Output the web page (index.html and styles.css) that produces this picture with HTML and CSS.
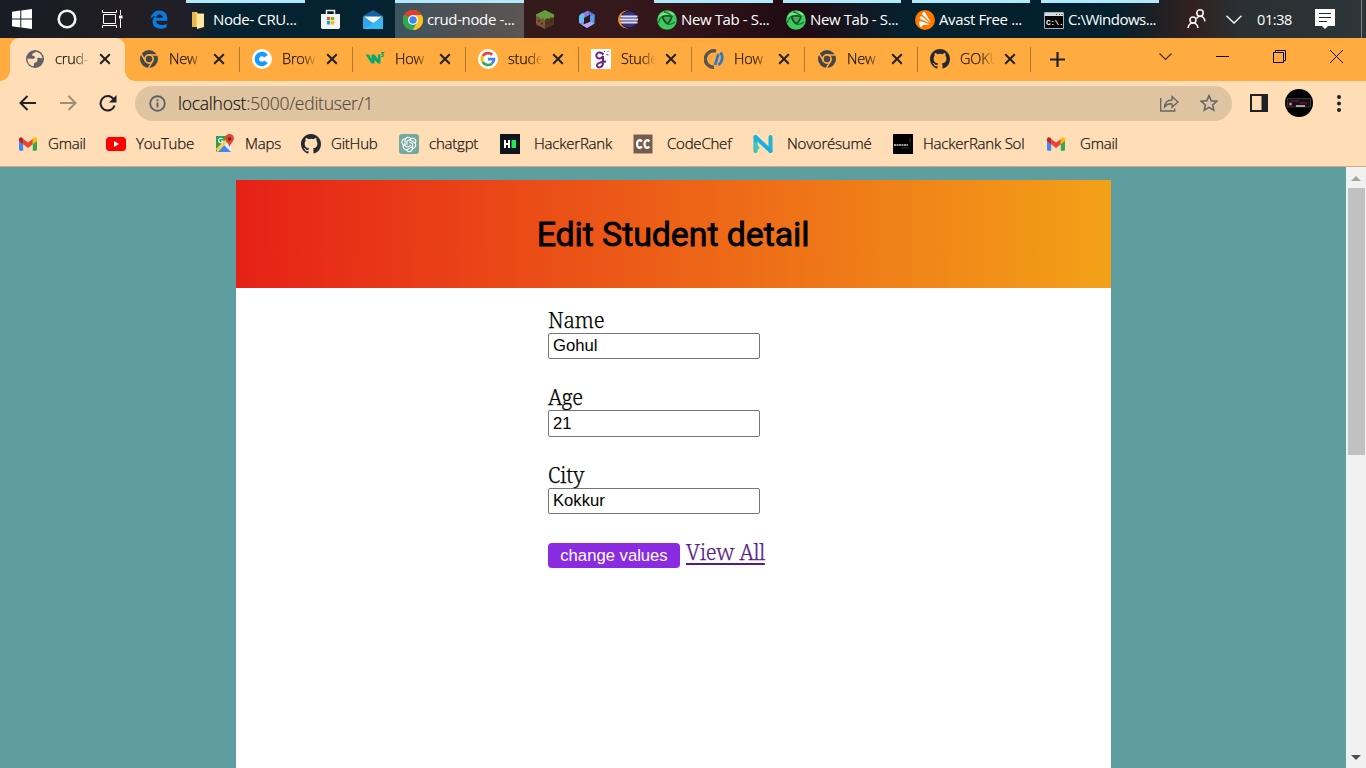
FILE: index.html
```html
<!DOCTYPE html>
<html lang="en">
<head>
<meta charset="utf-8">
<title>crud-node</title>
<link rel="stylesheet" href="styles.css">
</head>
<body>
<svg class="defs" width="0" height="0">
  <defs>
    <symbol id="x" viewBox="0 0 12 12"><path d="M1.2 1.2l9.6 9.6M10.8 1.2L1.2 10.8" stroke="#202124" stroke-width="2" fill="none"/></symbol>
    <symbol id="chromeMono" viewBox="0 0 20 20"><circle cx="10" cy="10" r="9" fill="#454647"/><circle cx="10" cy="10" r="4.1" fill="#454647" stroke="#ffab40" stroke-width="1.7"/><path d="M10 5.9h8.4M6.5 12.1L2.3 4.8M13.5 12.1L9.4 19.2" stroke="#ffab40" stroke-width="1.5"/></symbol>
    <symbol id="github" viewBox="0 0 16 16"><path fill="#24292f" d="M8 0C3.58 0 0 3.58 0 8c0 3.54 2.29 6.53 5.47 7.59.4.07.55-.17.55-.38 0-.19-.01-.82-.01-1.49-2.01.37-2.53-.49-2.69-.94-.09-.23-.48-.94-.82-1.13-.28-.15-.68-.52-.01-.53.63-.01 1.08.58 1.23.82.72 1.21 1.87.87 2.33.66.07-.52.28-.87.51-1.07-1.78-.2-3.64-.89-3.64-3.95 0-.87.31-1.59.82-2.15-.08-.2-.36-1.02.08-2.12 0 0 .67-.21 2.2.82a7.6 7.6 0 0 1 4 0c1.53-1.04 2.2-.82 2.2-.82.44 1.1.16 1.92.08 2.12.51.56.82 1.27.82 2.15 0 3.07-1.87 3.75-3.65 3.95.29.25.54.73.54 1.48 0 1.07-.01 1.93-.01 2.2 0 .21.15.46.55.38A8.01 8.01 0 0 0 16 8c0-4.42-3.58-8-8-8z"/></symbol>
    <symbol id="gmail" viewBox="0 0 20 16"><path d="M1 3v10.5a1.3 1.3 0 0 0 1.3 1.3H5.200V6z" fill="#4285f4"/><path d="M19 3v10.500a1.300 1.300 0 0 1-1.300 1.300H14.800V6z" fill="#34a853"/><path d="M5.200 2.900L10 6.600l4.800-3.700v5.300L10 11.900 5.200 8.200z" fill="#ea4335"/><path d="M1 3.300C1 1.400 3 .7 4.300 1.800l.9.900v5.500L1 5z" fill="#c5221f"/><path d="M19 3.300c0-1.900-2-2.600-3.300-1.500l-.9.900v5.500L19 5z" fill="#fbbc04"/></symbol>
    <symbol id="green" viewBox="0 0 20 20"><circle cx="10" cy="10" r="9.800" fill="#3ccb5c"/><path d="M1 7C5 1 14-1 18 5L10 4.500z" fill="#74e78a"/><path d="M5.500 6.500q4.500-1.500 9.500 0-1 4.500-4.700 7.500-4-3-4.800-7.500z" fill="#45a757" stroke="#10461f" stroke-width="1.500" stroke-linejoin="round"/><path d="M5.300 6.500Q2 9 1.500 13M15 6.500Q12 2.500 7 2M10.300 14q4.500 1 7.500-2" fill="none" stroke="#1b7a30" stroke-width="1.300"/></symbol>
  </defs>
</svg>

<header class="taskbar">
  <div class="cell"><svg width="20" height="20" viewBox="0 0 20 20"><path fill="#fff" d="M0 2.700L8.300 1.500v8H0zM9.300 1.400L20 0v9.500H9.300zM0 10.500h8.300v8L0 17.300zM9.300 10.500H20V20L9.300 18.600z"/></svg></div>
  <div class="cell"><svg width="20" height="20" viewBox="0 0 20 20"><circle cx="10" cy="10" r="8.300" fill="none" stroke="#f4f4f4" stroke-width="2.600"/></svg></div>
  <div class="cell"><svg width="21" height="20" viewBox="0 0 21 20" fill="none" stroke="#fff"><path d="M1.500 5.500h12v9h-12zM.5 1v2.500h14V1M.5 19v-2.500h14V19M18.500 1v5M18.500 10v9"/><path d="M17 8h3.500" stroke-width="3"/></svg></div>
  <div class="cell edge"><svg width="18" height="19" viewBox="0 0 18 19"><path fill="#0a7be0" d="M.5 9C1.500 3.500 5 .5 9.300.5c5.500 0 8 4 8 8v2.200H6c.3 3 3 4.300 5.600 4.300 2 0 3.700-.6 5-1.300v3.500c-1.500.9-3.500 1.500-6 1.500-5 0-8-2.800-8-7.200C2.600 9 4 7 6.300 5.700 3.800 6 1.900 7.200.5 9zM6.200 7.800h6.500c0-2.200-1-3.500-3.200-3.500-1.900 0-3.100 1.700-3.300 3.500z"/></svg></div>
  <div class="app app-node"><svg width="12" height="17" viewBox="0 0 12 17"><path d="M0 0h5l1 1.500h6V15H0z" fill="#f4cf67"/><path d="M5 2h7v13L5 17z" fill="#ffe7a1"/><path d="M0 0h2l2 2v13H0z" fill="#e4b94e"/></svg><span>Node- CRU...</span></div>
  <div class="cell"><svg width="19" height="20" viewBox="0 0 19 20"><path d="M5.500 6V1.500h8V6" fill="none" stroke="#eee" stroke-width="1.500"/><path d="M0 5h19v13.500L18 20H1L0 18.500z" fill="#f4f4f4"/><path d="M6 8h3.200v3.200H6z" fill="#f25022"/><path d="M10 8h3.200v3.200H10z" fill="#7fba00"/><path d="M6 12h3.200v3.500H6z" fill="#00a4ef"/><path d="M10 12h3.200v3.500H10z" fill="#ffb900"/></svg></div>
  <div class="cell"><svg width="20" height="19" viewBox="0 0 20 19"><path d="M0 6l10-6 10 6v13H0z" fill="#1263a8"/><path d="M1 6.500h18L10 14z" fill="#f5f8fb"/><path d="M0 6.500L20 19H0z" fill="#2fa5ee"/><path d="M20 6.500V19H1L10 13z" fill="#35b8f5"/></svg></div>
  <div class="app app-chrome"><svg width="20" height="20" viewBox="0 0 20 20"><circle cx="10" cy="10" r="10" fill="#fbc116"/><path d="M10 10L1.300 5a10 10 0 0 1 17.400 0z" fill="#e33b2e"/><path d="M10 10L1.300 5A10 10 0 0 0 10 20l4.300-7.500z" fill="#2da94f"/><path d="M18.700 5H10v5l4 2.500L10 20A10 10 0 0 0 18.700 5z" fill="#fcc31e"/><circle cx="10" cy="10" r="5" fill="#fff"/><circle cx="10" cy="10" r="3.800" fill="#4285f4"/></svg><span>crud-node -...</span></div>
  <div class="cell"><svg width="18" height="19" viewBox="0 0 18 19"><path d="M0 4.500L9 9v10l-9-4.500z" fill="#79553a"/><path d="M18 4.500L9 9v10l9-4.500z" fill="#51361f"/><path d="M9 0l9 4.500V7l-2 1-1-1-2 2-2-1-2 2-2-2-2 1-2-2-3-1V4.500z" fill="#659b3f"/><path d="M3 10v1.500M6 13v1.500M11.500 12v1.500M15 10v1.500" stroke="#362316" stroke-width="1.500"/></svg></div>
  <div class="cell"><svg width="18" height="19" viewBox="0 0 18 19"><path d="M10 .500L4 3.500 1 6v7l5 2V8l6-3.500z" fill="#8d7bea"/><path d="M10 .500l6.500 4V9l-4.500-2.500V4.500z" fill="#4b7ddf"/><path d="M16.500 4.500v9L9 18l-5-3 8-3V6.500z" fill="#579ded"/><path d="M1 13l8 5 7.500-4.500-4.500-1.500-6 2.500z" fill="#b9a6f6"/><path d="M1 6l3-3 2.500 1.500L6 8v4L1 13z" fill="#5fc4f3"/></svg></div>
  <div class="cell"><svg width="20" height="19" viewBox="0 0 20 19"><circle cx="9" cy="9.500" r="9" fill="#ef9028"/><circle cx="11" cy="9.500" r="9" fill="#251438"/><circle cx="11" cy="9.500" r="8" fill="#3b317a"/><path d="M2.500 6.500h17M2 9.500h18M2.500 12.500h17" stroke="#e0dded" stroke-width="2"/></svg></div>
  <div class="app app-tab1"><svg width="20" height="20"><use href="#green"/></svg><span>New Tab - S...</span></div>
  <div class="app app-tab2"><svg width="20" height="20"><use href="#green"/></svg><span>New Tab - S...</span></div>
  <div class="app app-avast"><svg width="20" height="20" viewBox="0 0 20 20"><circle cx="10" cy="10" r="10" fill="#ff7800"/><path d="M8 2.500c1-.8 2-.3 2.500.7L16 13 7.500 4.800C6.800 4 7 3 8 2.500zM5 7c.5-1 1.800-1 2.500-.3L15 13.500 5.500 9C4.700 8.500 4.600 7.700 5 7zM4 12.500c0-1 1-1.500 2-1.300l9 3.300-7 .500-2 2.500c-1-1-2-3-2-5z" fill="#fff"/></svg><span>Avast Free ...</span></div>
  <div class="app app-cmd"><svg width="20" height="17" viewBox="0 0 20 17"><path d="M.5.500h19v16H.5z" fill="#000" stroke="#a9adb0"/><path d="M1 1h18v3H1z" fill="#d5dce1"/><path d="M12 2.500h1M15 2.500h1M17.500 2.500h1" stroke="#555"/><text x="2" y="13" class="cmd-text">C:\.</text></svg><span>C:\Windows...</span></div>
  <div class="cell"><svg width="19" height="20" viewBox="0 0 19 20" fill="none" stroke="#f2f2f2" stroke-width="1.600"><circle cx="13" cy="4" r="3.200"/><circle cx="6" cy="11" r="3"/><path d="M1 19c.5-3 2.500-5 5-5s4.500 2 5 5M9.500 9.500C10.500 8 11.500 7.300 13 7.300c2.700 0 4.500 2 5 5"/></svg></div>
  <div class="cell"><svg width="16" height="9" viewBox="0 0 16 9"><path d="M.500.700L8 8 15.500.700" fill="none" stroke="#fff" stroke-width="1.300"/></svg></div>
  <div class="cell clock">01:38</div>
  <div class="cell"><svg width="20" height="20" viewBox="0 0 20 20"><path d="M0 0h20v17h-7l-3 3-3-3H0z" fill="#fff"/><path d="M4 4.500h12M4 8.500h12M4 12.500h8" stroke="#25292c"/></svg></div>
  <div class="desktop-edge"></div>
</header>

<nav class="tabs">
  <div class="tab active"><svg class="fav" viewBox="0 0 20 20"><circle cx="10" cy="10" r="9" fill="#5f6368"/><path d="M10.500 2.800c-1 1.700-3.500 1.200-3.300 3.200.2 1.400 2.300.4 2.700 1.900.5 1.700-1.500 2-3.200 1.900L2.500 9.500c-.2 3 1 5 2.500 6.300l2.500 1.400c1.500.4 1.500-1.500 1.500-2.500 0-1.500 2.500-1 3.300-2.500.7-1.500-.8-2.500.5-3.200 1.500-.8 2.700.5 4.700.2C17 6 14.500 3.200 10.500 2.800z" fill="#ffdeb7"/></svg><span>crud-</span><svg class="close"><use href="#x"/></svg></div>
  <div class="tab"><svg class="fav"><use href="#chromeMono"/></svg><span>New</span><svg class="close"><use href="#x"/></svg></div>
  <div class="tab"><svg class="fav" viewBox="0 0 20 20"><circle cx="10" cy="10" r="10" fill="#fff"/><path d="M14 7.200A5 5 0 1 0 14 12.800" fill="none" stroke="#159bff" stroke-width="4.400"/></svg><span>Brow</span><svg class="close"><use href="#x"/></svg></div>
  <div class="tab"><svg class="fav" viewBox="0 0 20 20"><path d="M.5 5.500h3.500l2.500 4.500V5.500h3l3.500 4.500V5.500h2.500v9h-2.500L9.500 11v3.500H6.500z" fill="#04aa6d"/><path d="M16 3.500h2.700L17 5.500c2.500 0 2 2.500-.9 2" fill="none" stroke="#04aa6d" stroke-width="1.100"/></svg><span>How</span><svg class="close"><use href="#x"/></svg></div>
  <div class="tab"><svg class="fav" viewBox="0 0 20 20"><circle cx="10" cy="10" r="10" fill="#fff"/><g fill="none" stroke-width="2.700"><path d="M14.200 5.800A6 6 0 0 0 4.800 7" stroke="#ea4335"/><path d="M4.800 7a6 6 0 0 0 0 6" stroke="#fbbc05"/><path d="M4.800 13a6 6 0 0 0 8.900 1.700" stroke="#34a853"/><path d="M13.700 14.700A6 6 0 0 0 16 10.200h-6" stroke="#4285f4"/></g></svg><span>stude</span><svg class="close"><use href="#x"/></svg></div>
  <div class="tab"><svg class="fav" viewBox="0 0 20 20"><path d="M0 0h20v20H0z" fill="#fff"/><path d="M12.500 5.500C9 1.500 4.500 4 5.500 7.500c1 3 5 2.500 6.500-.5v7c0 4.500-5 5.500-6 3-1-3 4-4 9-4.500" fill="none" stroke="#692482" stroke-width="2"/><path d="M13 3l1-1M15.500 5.500l2 .5M17 2v1" stroke="#692482"/></svg><span>Stude</span><svg class="close"><use href="#x"/></svg></div>
  <div class="tab"><svg class="fav" viewBox="0 0 20 20"><path d="M12 2.200A8.200 8.200 0 1 0 10 18.200" fill="none" stroke="#555" stroke-width="3.400"/><path d="M14.500 5L11 16" stroke="#2878c8" stroke-width="2.600"/><path d="M16.500 3.500c3 3.500 2 9.500-2 12.500" fill="none" stroke="#2878c8" stroke-width="2.800"/></svg><span>How</span><svg class="close"><use href="#x"/></svg></div>
  <div class="tab"><svg class="fav"><use href="#chromeMono"/></svg><span>New</span><svg class="close"><use href="#x"/></svg></div>
  <div class="tab"><svg class="fav"><use href="#github"/></svg><span>GOKU</span><svg class="close"><use href="#x"/></svg></div>
  <svg class="plus" width="15" height="15" viewBox="0 0 15 15"><path d="M7.500 0v15M0 7.500h15" stroke="#202124" stroke-width="2.200"/></svg>
  <div class="window-buttons">
    <svg width="13" height="8" viewBox="0 0 13 8"><path d="M.500.500l6 6 6-6" fill="none" stroke="#3b2c17" stroke-width="1.100"/></svg>
    <svg width="13" height="8" viewBox="0 0 13 8"><path d="M0 3.500h13" stroke="#000"/></svg>
    <svg width="13" height="13" viewBox="0 0 13 13"><path d="M.500 2.500h10v10H.500zM2.500 2.500v-2h10v10h-2" fill="none" stroke="#000"/></svg>
    <svg width="13" height="13" viewBox="0 0 13 13"><path d="M0 0l13 13M13 0L0 13" stroke="#1b130a"/></svg>
  </div>
</nav>

<div class="toolbar">
  <svg class="back" width="17" height="16" viewBox="0 0 17 16"><path d="M17 8H2M8.500 1L1.500 8l7 7" fill="none" stroke="#202124" stroke-width="2"/></svg>
  <svg class="forward" width="17" height="16" viewBox="0 0 17 16"><path d="M0 8h15M8.500 1l7 7-7 7" fill="none" stroke="#a28d74" stroke-width="2"/></svg>
  <svg class="reload" width="18" height="17" viewBox="0 0 18 17"><path d="M14.500 4A7.200 7.200 0 1 0 15.600 10.500" fill="none" stroke="#202124" stroke-width="2"/><path d="M17.500 0v7.500H10z" fill="#202124"/></svg>
  <div class="omnibox">
    <svg width="17" height="17" viewBox="0 0 17 17"><circle cx="8.500" cy="8.500" r="7.300" fill="none" stroke="#5f6368" stroke-width="1.900"/><path d="M8.500 7.500v5M8.500 4.200v2" stroke="#5f6368" stroke-width="1.900"/></svg>
    <div class="url">localhost<span>:5000/edituser/1</span></div>
    <svg class="share" width="19" height="17" viewBox="0 0 19 17"><path d="M.700 3v13h14v-2.500M4.500 12C5 7.500 8 5 12 5V1.500L18 7l-6 5.300V8.800C9 8.500 6.500 9.500 4.500 12z" fill="none" stroke="#666463" stroke-width="1.300"/></svg>
    <svg width="18" height="18" viewBox="0 0 18 18"><path d="M9 1.600l2.200 5.100 5.600.5-4.200 3.700 1.200 5.400L9 13.400l-4.800 2.900 1.200-5.400-4.200-3.700 5.600-.5z" fill="none" stroke="#626366" stroke-width="1.500"/></svg>
  </div>
  <svg class="panel" width="18" height="18" viewBox="0 0 18 18"><path d="M1 1h16v16H1z" fill="none" stroke="#202124" stroke-width="2"/><path d="M11.500 0H18v18h-6.500z" fill="#202124"/></svg>
  <svg class="avatar" width="28" height="28" viewBox="0 0 28 28"><circle cx="14" cy="14" r="14" fill="#000"/><path d="M2.500 9.500h23v8.500h-23z" fill="#171219" stroke="#4b4a50" stroke-width=".7"/><path d="M6 12h8M15 14h7" stroke="#8d1826" stroke-width="1.200"/><circle cx="5.500" cy="15" r="1.500" fill="#f16e7d"/><path d="M11 17h9" stroke="#ccc" stroke-width="1.500"/></svg>
  <svg class="menu" width="4" height="17" viewBox="0 0 4 17" fill="#202124"><circle cx="2" cy="2" r="2"/><circle cx="2" cy="8.500" r="2"/><circle cx="2" cy="15" r="2"/></svg>
</div>

<nav class="bookmarks">
  <a class="b1"><svg><use href="#gmail"/></svg><span>Gmail</span></a>
  <a class="b2"><svg viewBox="0 0 20 20"><rect y="3" width="20" height="14" rx="3.500" fill="#f00"/><path d="M8 7l5 3-5 3z" fill="#fff"/></svg><span>YouTube</span></a>
  <a class="b3"><svg viewBox="0 0 20 20"><path d="M1 2h15v16H1z" fill="#2ba153"/><path d="M1 18L14 5l2 2v11z" fill="#e9eef2"/><path d="M2 18l7-7 7 7z" fill="#4284f4"/><path d="M1 15L13 3l2 2L3 18z" fill="#f6d04d"/><path d="M7.500 5A2.200 2.200 0 1 0 8 7H6" fill="none" stroke="#fff" stroke-width="1.200"/><path d="M14.500 0C9.500 0 9 5.500 12 8.500c1.500 1.500 2 3 2.500 4.500.5-1.500 1-3 2.500-4.500C20 5.500 19.500 0 14.500 0z" fill="#df4435"/><circle cx="14.500" cy="5" r="1.700" fill="#7e1c18"/></svg><span>Maps</span></a>
  <a class="b4"><svg><use href="#github"/></svg><span>GitHub</span></a>
  <a class="b5"><svg viewBox="0 0 20 20"><rect width="20" height="20" rx="3" fill="#74aa9c"/><g fill="none" stroke="#fff" stroke-width="1.100"><g id="knot"><path d="M6 12V6.500a3.300 3.300 0 0 1 6.200-1.500M8 11V7l4.500-2.500a3.200 3.200 0 0 1 4 4.500"/></g><use href="#knot" transform="rotate(120 10 10)"/><use href="#knot" transform="rotate(240 10 10)"/></g></svg><span>chatgpt</span></a>
  <a class="b6"><svg viewBox="0 0 20 20"><path d="M0 0h20v20H0z" fill="#0e141e"/><path d="M5 6v8M9 6v8M5 10h4" stroke="#fff" stroke-width="2"/><path d="M11.500 6H16v8h-4.500z" fill="#1ee65d"/></svg><span>HackerRank</span></a>
  <a class="b7"><svg viewBox="0 0 20 20"><path d="M.500.500h19v19H.500z" fill="#755c4c"/><path d="M9 7.300C6.500 5 4 6.800 4 10s2.500 5 5 2.700M16.500 7.300C14 5 11.500 6.800 11.500 10s2.500 5 5 2.700" fill="none" stroke="#fff" stroke-width="2.300"/></svg><span>CodeChef</span></a>
  <a class="b8"><svg viewBox="0 0 20 20"><path d="M2.500 3v14M17.500 3v14" stroke="#27b5ce" stroke-width="4" stroke-linecap="round"/><path d="M2.500 3l15 14" stroke="#1ab0dd" stroke-width="4" stroke-linecap="round"/><path d="M2.500 8v9L6 13" fill="#45c8b7" stroke="#45c8b7" stroke-width="2"/></svg><span>Novorésumé</span></a>
  <a class="b9"><svg viewBox="0 0 20 20"><path d="M0 0h20v20H0z" fill="#000"/><path d="M1 11h14" stroke="#999" stroke-width="2" stroke-dasharray="2 .5"/><path d="M17 4v5M8 14h8" stroke="#253640"/></svg><span>HackerRank Sol</span></a>
  <a class="b10"><svg><use href="#gmail"/></svg><span>Gmail</span></a>
</nav>

<div class="viewport">
  <main class="page">
    <section class="card">
      <h1>Edit Student detail</h1>
      <form>
        <label>Name<input type="text" value="Gohul"></label>
        <label class="age">Age<input type="text" value="21"></label>
        <label>City<input type="text" value="Kokkur"></label>
        <div class="actions"><button type="button">change values</button><a href="#">View All</a></div>
      </form>
    </section>
  </main>
  <aside class="scrollbar">
    <svg width="10" height="5" viewBox="0 0 10 5"><path d="M0 5l5-5 5 5z" fill="#a3a3a3"/></svg>
    <div class="thumb"></div>
    <svg class="down" width="10" height="5" viewBox="0 0 10 5"><path d="M0 0l5 5 5-5z" fill="#505050"/></svg>
  </aside>
</div>
</body>
</html>
```

FILE: styles.css
```css
* { box-sizing: border-box; }
html, body { margin: 0; height: 100%; overflow: hidden; }
body { display: flex; flex-direction: column; font-family: "Open Sans", "Noto Sans", sans-serif; }
svg { display: block; flex: none; }
.defs { position: absolute; }

.taskbar {
  flex: none; height: 38px; display: grid;
  grid-template-columns: 44px 46px 44px 52px 119px 51px 34px 5px 129px 42px 42px 40px 6px 119px 10px 118px 11px 118px 11px 118px 16px 42px 34px 47px 54px 9px 1px;
  background: linear-gradient(90deg, #181c24 0, #211e24 130px, #201f29 185px, #04222f 225px, #04222f 390px, #351a1c 530px, #34171b 650px, #210a13 800px, #06202d 900px, #02202e 1110px, #32201f 1190px, #2a3034 1240px, #2c3539 1366px);
  color: #fff; font-size: 15px;
}
.cell { display: flex; align-items: center; justify-content: center; }
.edge { padding-right: 2px; }
.app { display: flex; align-items: center; gap: 4px; padding: 3px 0 0 3px; border-top: 3px solid #afe9fb; white-space: nowrap; overflow: hidden; letter-spacing: -.38px; line-height: 20px; }
.app span { margin-top: -6px; }
.app svg { margin-top: -4px; }
.app-node { padding-left: 6px; gap: 9px; }
.app-chrome { grid-column: 9; padding-left: 8px; background: linear-gradient(90deg, #3c5560, #505052 70px, #5c5655); }
.app-tab1 { grid-column: 14; }
.app-tab2 { grid-column: 16; }
.app-avast { grid-column: 18; }
.app-cmd { grid-column: 20; letter-spacing: -.5px; }
.app-cmd + .cell { grid-column: 22; }
.cmd-text { font: bold 8px "Liberation Mono", monospace; fill: #fff; }
.clock { font-size: 14.500px; letter-spacing: -.4px; }
.desktop-edge { grid-column: 27; background: #7c8082; }

.tabs { flex: none; height: 43px; display: flex; padding-left: 10px; background: #ffab40; color: #1c140a; font-size: 14.500px; }
.tab { width: 113px; display: flex; align-items: center; padding: 0 0 1px 13px; position: relative; }
.tab:not(.active)::after { content: ""; position: absolute; right: -.500px; top: 9px; width: 1px; height: 25px; background: #ad7937; }
.tab span { width: 36px; margin: -1px 0 0 10px; white-space: nowrap; font-weight: 300; -webkit-text-stroke: .25px; letter-spacing: -.2px; -webkit-mask-image: linear-gradient(90deg, #000 55%, transparent 97%); mask-image: linear-gradient(90deg, #000 55%, transparent 97%); }
.fav { width: 20px; height: 20px; }
.close { width: 12px; height: 12px; margin-left: 8px; }
.tab.active { width: 115px; margin-right: 1px; padding-left: 15px; border-radius: 9px 9px 0 0; background: #ffdeb7; }
.tab.active::before { content: ""; position: absolute; left: -10px; right: -10px; bottom: 0; height: 10px; background: radial-gradient(circle at 0 0, transparent 9.500px, #ffdeb7 10px) left / 10px 10px no-repeat, radial-gradient(circle at 100% 0, transparent 9.500px, #ffdeb7 10px) right / 10px 10px no-repeat; }
.plus { margin: 14px 0 0 20px; }
.window-buttons { display: flex; align-items: center; gap: 44px; height: 37px; margin: 0 23px 0 auto; }

.toolbar { flex: none; height: 44px; display: flex; align-items: center; padding-left: 19px; background: #ffdeb7; }
.forward { margin-left: 24px; }
.reload { margin-left: 22px; }
.omnibox { width: 1097px; height: 35px; margin: 0 18px 0 18px; padding: 0 14px; display: flex; align-items: center; border-radius: 18px; background: #dfc4a1; }
.url { margin: 0 auto 0 12px; color: #100d0a; font-size: 17.500px; font-weight: 300; line-height: 24px; letter-spacing: -.24px; -webkit-text-stroke: .15px; }
.url span { color: #55493b; }
.share { margin-right: 21px; margin-left: -1px; }
.avatar { margin: 0 24px 0 17px; }

.bookmarks { flex: none; height: 42px; display: flex; align-items: center; padding: 0 0 4px 18px; background: #ffdeb7; border-bottom: 1px solid #c9af8e; color: #16120e; font-size: 15px; font-weight: 300; -webkit-text-stroke: .25px; }
.bookmarks a { display: flex; align-items: center; gap: 10px; flex: none; white-space: nowrap; letter-spacing: -.22px; }
.bookmarks svg { width: 20px; height: 20px; -webkit-text-stroke: 0; }
.bookmarks span { margin-top: -1px; }
.b1 { width: 88px; } .b2 { width: 109px; } .b3 { width: 86px; } .b4 { width: 98px; } .b5 { width: 101px; }
.b6 { width: 133px; } .b7 { width: 120px; } .b8 { width: 140px; } .b9 { width: 153px; } .b10 { width: 90px; }
.bookmarks .b6, .bookmarks .b7, .bookmarks .b8, .bookmarks .b10 { gap: 14px; }

.viewport { flex: 1; min-height: 0; display: flex; background: #5f9ea0; overflow: hidden; }
.page { width: 1346px; padding: 13px 235px 0 236px; }
.card { height: 900px; background: #fff; font-family: "Noto Serif", "Droid Serif", "Liberation Serif", serif; font-size: 21px; font-weight: 300; -webkit-text-stroke: .25px; letter-spacing: -.25px; }
h1 { margin: 0; height: 108px; padding-right: 1px; text-align: center; background: linear-gradient(90deg, #e62117, #f3a118); font: 400 34px/109px Roboto, sans-serif; -webkit-text-stroke: .8px #000; letter-spacing: -.12px; color: #000; }
form { padding: 20px 0 0 312px; }
label { display: block; height: 77px; line-height: 25px; color: #000; }
label.age { height: 78px; }
input { display: block; width: 212px; height: 26px; padding: 1px 4px; border: 1px solid #767676; border-radius: 2px; background: #fff; color: #000; font: 16.670px "Liberation Sans", sans-serif; -webkit-text-stroke: 0; outline: 0; }
.age input { height: 27px; }
.actions { display: flex; align-items: flex-start; gap: 6px; line-height: 25px; }
button { width: 132px; height: 25px; margin-top: 3px; padding: 0; border: 0; border-radius: 4px; background: #8a2be2; color: #fff; font: 16.670px "Liberation Sans", sans-serif; -webkit-text-stroke: 0; }
.actions a { color: #551a8b; text-underline-offset: 3px; text-decoration-thickness: 2px; }
.scrollbar { width: 20px; display: flex; flex-direction: column; align-items: center; padding: 9px 0 8px; background: #f1f1f1; }
.thumb { width: 17px; height: 267px; margin-top: 7px; margin-left: 1px; background: #c1c1c1; }
.down { margin-top: auto; }
```
